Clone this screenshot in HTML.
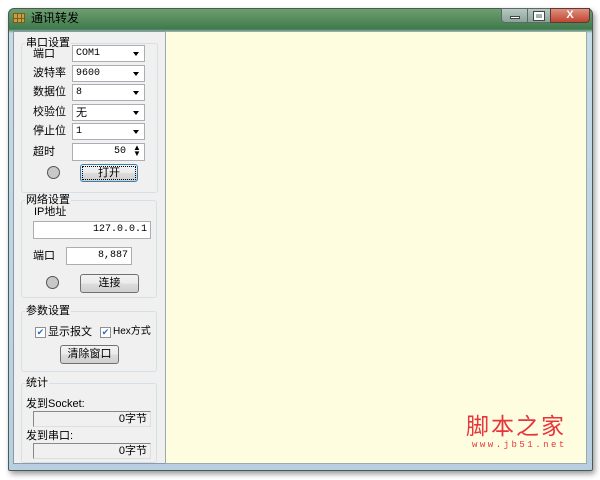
<!DOCTYPE html>
<html><head><meta charset="utf-8"><style>
*{box-sizing:border-box}
body{margin:0;width:600px;height:480px;background:#fff;position:relative;overflow:hidden;font-family:"Liberation Sans","Noto Sans CJK SC",sans-serif;font-size:11px;color:#000;line-height:13px}
.a{position:absolute}
.win{left:8px;top:8px;width:585px;height:463px;border-radius:6px 6px 2px 2px;background:linear-gradient(#6f9f70,#3f7a4c 20px,#c6dbe6 24px,#b7cfe0);border:1px solid #4a5a5a;box-shadow:2px 3px 6px rgba(0,0,0,.4)}
.cl{left:13px;top:31px;width:574px;height:433px;background:#f0f0f0;border:1px solid #8a9aa8}
.yel{left:165px;top:31px;width:422px;height:433px;background:#fffddf;border:1px solid #9aa}
.gb{border:1px solid #d5dfe5;border-radius:3px}
.gt{background:#f0f0f0;padding:0 1px;font-size:11px;line-height:12px}
.cb{background:#fff;border:1px solid #abadb3;height:17px;font-family:"Liberation Mono",monospace;font-size:10px;line-height:15px;padding-left:3px}
.cb:after{content:"";position:absolute;right:5px;top:6px;border:3.5px solid transparent;border-top:4px solid #000}
.lb{font-size:11px;line-height:12px}
.btn{border:1px solid #707070;border-radius:3px;background:linear-gradient(#f2f2f2,#ebebeb 50%,#dddddd 50%,#cfcfcf);text-align:center;font-size:11px;line-height:16px}
.led{width:13px;height:13px;border-radius:50%;background:#c8c8c8;border:1px solid #555}
.tb{background:#fff;border:1px solid #abadb3;height:18px;font-family:"Liberation Mono",monospace;font-size:10px;text-align:right;padding-right:3px;line-height:16px}
.ro{border:1px solid #888;border-right-color:#ddd;border-bottom-color:#ddd;height:16px;text-align:right;padding-right:3px;line-height:14px;background:#f0f0f0}
.chk{width:11px;height:11px;border:1px solid #8f8f8f;background:#fff;color:#2a6ad0;font-size:9px;line-height:9px;text-align:center}
</style></head><body>
<div class="a win"></div>
<div class="a" style="left:13px;top:13px;width:12px;height:10px;background:#c9a040;border:1px solid #7a5a20;background-image:linear-gradient(90deg,transparent 3px,#7a5a20 3px,#7a5a20 4px,transparent 4px,transparent 7px,#7a5a20 7px,#7a5a20 8px,transparent 8px),linear-gradient(transparent 4px,#7a5a20 4px,#7a5a20 5px,transparent 5px)"></div>
<div class="a" style="left:31px;top:11px;font-size:12px;line-height:14px">通讯转发</div>
<div class="a" style="left:501px;top:8px;width:27px;height:15px;border:1px solid #5a6a6a;border-radius:0 0 0 4px;background:linear-gradient(#b8c8c0,#8aa49a)"><div class="a" style="left:8px;top:7px;width:10px;height:3px;background:#fff;border:1px solid #444"></div></div>
<div class="a" style="left:527px;top:8px;width:24px;height:15px;border:1px solid #5a6a6a;background:linear-gradient(#b8c8c0,#8aa49a)"><div class="a" style="left:6px;top:3px;width:10px;height:8px;border:2px solid #fff;outline:1px solid #444"></div></div>
<div class="a" style="left:550px;top:8px;width:40px;height:15px;border:1px solid #5a3a3a;border-radius:0 0 4px 0;background:linear-gradient(#e09080,#c04530);color:#fff;font-weight:bold;text-align:center;font-size:11px;line-height:13px">X</div>
<div class="a cl"></div>
<div class="a yel"></div>
<div class="a" style="left:466px;top:411px;color:#e8343c;font-size:23px;line-height:26px;letter-spacing:2px;font-family:'Noto Sans CJK SC',sans-serif">脚本之家</div>
<div class="a" style="left:472px;top:439px;color:#e8343c;font-size:9px;letter-spacing:2.5px;font-family:'Liberation Mono',monospace">www.jb51.net</div>

<div class="a gb" style="left:21px;top:43px;width:137px;height:150px"></div>
<div class="a gt" style="left:25px;top:37px">串口设置</div>
<div class="a lb" style="left:33px;top:48px">端口</div><div class="a cb" style="left:72px;top:45px;width:73px">COM1</div>
<div class="a lb" style="left:33px;top:67px">波特率</div><div class="a cb" style="left:72px;top:65px;width:73px">9600</div>
<div class="a lb" style="left:33px;top:86px">数据位</div><div class="a cb" style="left:72px;top:84px;width:73px">8</div>
<div class="a lb" style="left:33px;top:106px">校验位</div><div class="a cb" style="left:72px;top:104px;width:73px;font-family:'Noto Sans CJK SC',sans-serif;font-size:11px">无</div>
<div class="a lb" style="left:33px;top:125px">停止位</div><div class="a cb" style="left:72px;top:123px;width:73px">1</div>
<div class="a lb" style="left:33px;top:146px">超时</div><div class="a tb" style="left:72px;top:143px;width:73px;padding-right:18px">50</div>
<div class="a" style="left:133px;top:145px;font-size:8px;line-height:6px">▲<br>▼</div>
<div class="a led" style="left:47px;top:166px"></div>
<div class="a btn" style="left:80px;top:164px;width:58px;height:18px;border-color:#3c7fb1;outline:1px dotted #000;outline-offset:-3px">打开</div>

<div class="a gb" style="left:21px;top:200px;width:136px;height:98px"></div>
<div class="a gt" style="left:25px;top:194px">网络设置</div>
<div class="a lb" style="left:34px;top:206px">IP地址</div>
<div class="a tb" style="left:33px;top:221px;width:118px">127.0.0.1</div>
<div class="a lb" style="left:33px;top:250px">端口</div>
<div class="a tb" style="left:66px;top:247px;width:66px">8,887</div>
<div class="a led" style="left:46px;top:276px"></div>
<div class="a btn" style="left:80px;top:274px;width:59px;height:19px">连接</div>

<div class="a gb" style="left:21px;top:311px;width:136px;height:61px"></div>
<div class="a gt" style="left:25px;top:305px">参数设置</div>
<div class="a chk" style="left:35px;top:327px">✔</div><div class="a lb" style="left:48px;top:326px">显示报文</div>
<div class="a chk" style="left:100px;top:327px">✔</div><div class="a lb" style="left:113px;top:326px;font-size:10px">Hex方式</div>
<div class="a btn" style="left:60px;top:345px;width:59px;height:19px">清除窗口</div>

<div class="a gb" style="left:21px;top:383px;width:136px;height:80px"></div>
<div class="a gt" style="left:25px;top:377px">统计</div>
<div class="a lb" style="left:26px;top:398px">发到Socket:</div>
<div class="a ro" style="left:33px;top:411px;width:118px">0字节</div>
<div class="a lb" style="left:26px;top:430px">发到串口:</div>
<div class="a ro" style="left:33px;top:443px;width:118px">0字节</div>
</body></html>
